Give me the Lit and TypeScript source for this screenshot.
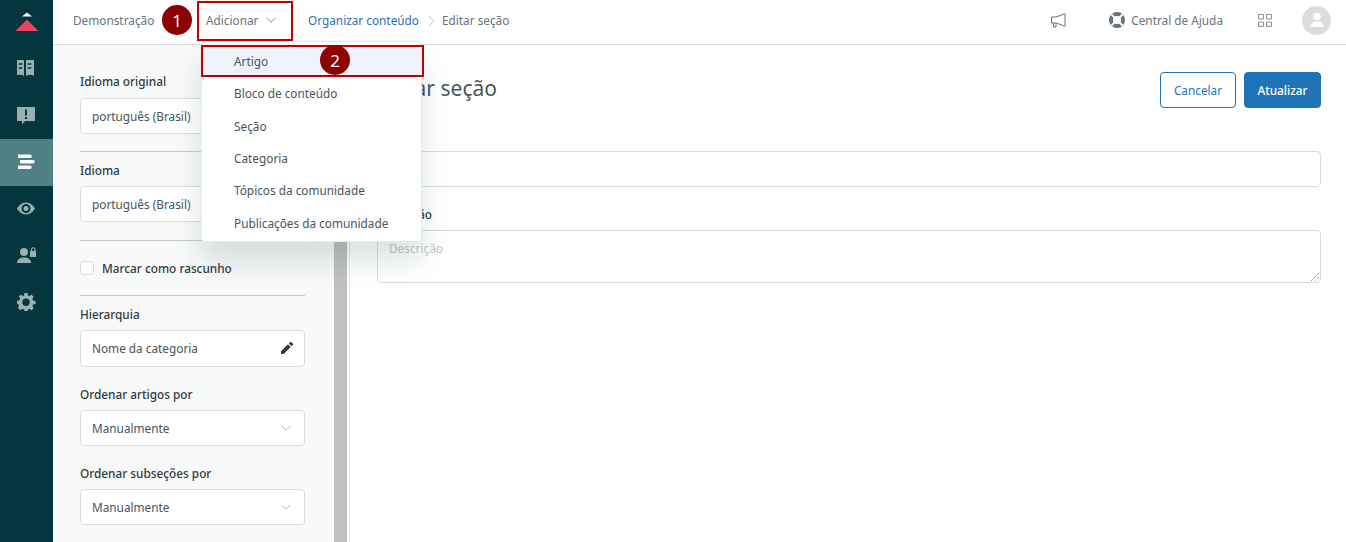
import { LitElement, html, css, svg } from 'lit';
import { customElement } from 'lit/decorators.js';

const chevron = html`<svg class="chev" width="10" height="10" viewBox="0 0 10 10"><path d="M.5 3l4.500 4 4.500-4" fill="none" stroke="currentColor" stroke-width="1"/></svg>`;

const navIcons = [
  svg`<path d="M0 1.500C3-.3 6 0 8 1.500V17c-2-1.400-5-1.600-8-.3zM18 1.500c-3-1.800-6-1.500-8 0V17c2-1.400 5-1.600 8-.3z" fill="currentColor" transform="translate(-1 -1)"/><path d="M2 5h3.800M2 9h3.800M11 5h3.800M11 9h3.800" stroke="#03363d" stroke-width="1.600" transform="translate(-.4 -1)"/>`,
  svg`<path d="M0 0h18v14H8l-3 3.500V14H0z" fill="currentColor"/><path d="M8 2.500h2V8.500H8zM8 10h2v2H8z" fill="#03363d"/>`,
  svg`<path d="M1 0h12a1.500 1.500 0 0 1 0 3.500H1zM3 5.500h13a1.600 1.600 0 0 1 0 3.500H3zM1 11h12a1.500 1.500 0 0 1 0 3.500H1z" fill="currentColor" transform="translate(0 1.500)"/>`,
  svg`<path d="M9 2.500C4.500 2.500 1.500 6 0 8.500c1.500 2.500 4.500 6 9 6s7.500-3.500 9-6c-1.500-2.500-4.500-6-9-6zm0 10.500a4.500 4.500 0 1 1 0-9 4.500 4.500 0 0 1 0 9zm0-7a2.500 2.500 0 1 0 0 5 2.500 2.500 0 0 0 0-5z" fill="currentColor"/>`,
  svg`<circle cx="7" cy="6" r="4" fill="currentColor"/><path d="M0 17c0-3.500 3-5.500 7-5.500s7 2 7 5.500z" fill="currentColor"/><path d="M13 5h6.500v6H13z" fill="currentColor"/><path d="M14.500 5V3.500a1.700 1.700 0 0 1 3.500 0V5" fill="none" stroke="currentColor" stroke-width="1.200"/>`,
  svg`<path fill="currentColor" fill-rule="evenodd" d="M7.500 0h3l.4 2.400 1.700.7 2-1.400 2.100 2.100-1.400 2 .7 1.700 2.500.5v3l-2.500.4-.7 1.700 1.400 2-2.100 2.100-2-1.400-1.700.7-.4 2.500h-3l-.4-2.500-1.700-.7-2 1.400L.7 14.900l1.400-2-.7-1.700L-.1 10.800v-3l2.500-.5.7-1.700-1.400-2L3.800 1.700l2 1.400 1.300-.7zM9 5.500a3.700 3.700 0 1 0 0 7.400 3.700 3.700 0 0 0 0-7.400z"/>`,
];

@customElement('app-root')
export class AppRoot extends LitElement {
  static styles = css`
    :host {
      display: block;
      width: 1346px;
      height: 542px;
      overflow: hidden;
      position: relative;
      font-family: 'Noto Sans', sans-serif;
      font-size: 11.800px;
      color: #2f3941;
      background: #fff;
    }
    .app { display: flex; height: 542px; }
    .rail {
      width: 53px;
      flex: none;
      background: #03363d;
      color: #9bb0b3;
      display: flex;
      flex-direction: column;
      align-items: center;
    }
    .logo { height: 46px; padding-top: 11px; box-sizing: border-box; }
    .rail-item {
      width: 100%;
      height: 46.500px;
      display: flex;
      align-items: center;
      justify-content: center;
    }
    .rail-item.active { background: #4d8184; color: #fff; }
    .body { flex: 1; display: flex; flex-direction: column; min-width: 0; }
    .top {
      height: 45px;
      flex: none;
      box-sizing: border-box;
      border-bottom: 1px solid #d8dcde;
      display: flex;
      align-items: center;
      padding: 0 0 4px 20px;
      color: #68737d;
    }
    .brand { width: 124px; flex: none; }
    .add { display: flex; align-items: center; gap: 8px; width: 111px; flex: none; padding-left: 9px; box-sizing: border-box; }
    .chev { flex: none; color: #87929d; }
    .box .chev { color: #b4bbc0; margin-right: 2px; }
    .crumb { color: #1f73b7; }
    .sep { margin: 2px 7px 0 9px; }
    .spacer { flex: 1; }
    .top-right { display: flex; align-items: center; padding-right: 15px; }
    .help { display: flex; align-items: center; gap: 6px; margin-left: 43px; }
    .apps { margin-left: 35px; }
    .avatar {
      width: 29px;
      height: 29px;
      border-radius: 50%;
      background: #dcdcdc;
      margin-left: 30px;
      display: flex;
      align-items: center;
      justify-content: center;
    }
    .content { flex: 1; display: flex; min-height: 0; }
    .side {
      width: 281px;
      flex: none;
      box-sizing: border-box;
      background: #f8f9f9;
      padding: 28px 29px 0 27px;
    }
    .side label, .main label { display: block; font-weight: 500; line-height: 16px; color: #2f3941; }
    .box {
      box-sizing: border-box;
      height: 36px;
      margin-top: 8px;
      background: #fff;
      border: 1px solid #d8dcde;
      border-radius: 4px;
      padding: 0 11px;
      display: flex;
      align-items: center;
      justify-content: space-between;
      color: #49545c;
    }
    .box.first { margin-top: 9px; }
    .box.tall { height: 37px; padding-bottom: 1px; }
    hr { border: 0; border-top: 1px solid #c2c8cc; margin: 0; }
    .sec-a { margin: 17px 0 10px; }
    .sec-b { margin: 18px 0 19px; }
    .check { display: flex; align-items: center; gap: 8px; font-weight: 500; line-height: 16px; margin-bottom: 19px; }
    .check i { width: 12px; height: 12px; background: #fff; border: 1px solid #d8dcde; border-radius: 3px; display: block; }
    .gap { margin-top: 19px; }
    .scroll { width: 13px; flex: none; background: #c0c0c0; }
    .main {
      flex: 1;
      margin-left: 2px;
      border-left: 1px solid #e4e7e8;
      padding: 27px 25px 0 27px;
      min-width: 0;
    }
    .head { display: flex; justify-content: space-between; align-items: flex-start; }
    h1 { margin: 1px 0 0; font-size: 21px; font-weight: 400; line-height: 30px; color: #49545c; }
    .actions { display: flex; gap: 8px; }
    .btn {
      box-sizing: border-box;
      height: 36px;
      border-radius: 4px;
      display: flex;
      align-items: center;
      justify-content: center;
      border: 1px solid #1f73b7;
    }
    .btn.ghost { width: 76px; color: #1f73b7; background: #fff; }
    .btn.solid { width: 77px; color: #fff; background: #1f73b7; font-weight: 500; }
    .main label.l1 { margin-top: 17px; height: 16px; }
    .input { height: 36px; box-sizing: border-box; border: 1px solid #d8dcde; border-radius: 4px; margin-top: 10px; }
    .main label.l2 { margin-top: 19px; }
    .area {
      position: relative;
      box-sizing: border-box;
      height: 53px;
      margin-top: 8px;
      border: 1px solid #d8dcde;
      border-radius: 4px;
      padding: 9px 11px;
      color: #c2c8cc;
    }
    .grip { position: absolute; right: 0; bottom: 0; }
    .menu {
      position: absolute;
      left: 201px;
      top: 41px;
      width: 221px;
      height: 201px;
      box-sizing: border-box;
      padding-top: 3px;
      background: #fff;
      border: 1px solid #e9ebed;
      border-radius: 4px;
      box-shadow: 0 20px 28px rgba(23, 73, 77, 0.15);
      color: #49545c;
    }
    .menu div {
      height: 32.300px;
      display: flex;
      align-items: center;
      padding-left: 32px;
    }
    .menu div.on { background: #edf3f9; }
    .frame { position: absolute; box-sizing: border-box; border: 2px solid #c00000; }
    .f1 { left: 197px; top: 1px; width: 96px; height: 40px; }
    .f2 { left: 201px; top: 45px; width: 223px; height: 32px; }
    .dot {
      position: absolute;
      width: 30px;
      height: 30px;
      border-radius: 50%;
      background: #8b0000;
      color: #fff;
      font-size: 17px;
      display: flex;
      align-items: center;
      justify-content: center;
    }
    .d1 { left: 162px; top: 5px; }
    .d2 { left: 320px; top: 45px; }
  `;

  render() {
    return html`
      <div class="app">
        <nav class="rail">
          <div class="logo">
            <svg width="24" height="20" viewBox="0 0 24 20"><path d="M12 1.500l5 4H7z" fill="#fff"/><path d="M12 8.500L23.500 20H.5z" fill="#e8435f"/></svg>
          </div>
          ${navIcons.map(
            (p, i) => html`<div class="rail-item ${i === 2 ? 'active' : ''}"><svg width="19" height="18" viewBox="0 0 19 18">${p}</svg></div>`
          )}
        </nav>
        <div class="body">
          <header class="top">
            <span class="brand">Demonstração</span>
            <span class="add">Adicionar ${chevron}</span>
            <span class="crumb">Organizar conteúdo</span>
            <svg class="sep" width="7" height="12" viewBox="0 0 7 12"><path d="M1 1l4.500 5L1 11" fill="none" stroke="#c2c8cc"/></svg>
            <span>Editar seção</span>
            <span class="spacer"></span>
            <div class="top-right">
              <svg width="16" height="15" viewBox="0 0 16 15"><path d="M15 .8v12.400L6 10H1.500V4H6zM3.500 10v4H6v-4" fill="none" stroke="#68737d"/></svg>
              <div class="help">
                <svg width="16" height="16" viewBox="0 0 16 16"><circle cx="8" cy="8" r="6" fill="none" stroke="#68737d" stroke-width="4"/><path d="M2.500 2.500l3 3M13.500 2.500l-3 3M2.500 13.500l3-3M13.500 13.500l-3-3" stroke="#fff" stroke-width="2"/></svg>
                <span>Central de Ajuda</span>
              </div>
              <svg class="apps" width="14" height="13" viewBox="0 0 14 13"><path d="M.5.500h5v4.500h-5zM8.500.500h5v4.500h-5zM.5 8h5v4.500h-5zM8.500 8h5v4.500h-5z" fill="none" stroke="#87929d"/></svg>
              <div class="avatar">
                <svg width="16" height="16" viewBox="0 0 16 16"><circle cx="8" cy="4.500" r="3.700" fill="#fff"/><path d="M1.500 15c0-3.500 3-5.500 6.500-5.500s6.500 2 6.500 5.500z" fill="#fff"/></svg>
              </div>
            </div>
          </header>
          <div class="content">
            <aside class="side">
              <label>Idioma original</label>
              <div class="box first">português (Brasil)</div>
              <hr class="sec-a" />
              <label>Idioma</label>
              <div class="box">português (Brasil)</div>
              <hr class="sec-b" />
              <div class="check"><i></i>Marcar como rascunho</div>
              <hr class="sec-a" />
              <label>Hierarquia</label>
              <div class="box tall">
                Nome da categoria
                <svg width="12" height="12" viewBox="0 0 13 13"><path d="M0 13V10l7.500-7.500 3 3L3 13zM8.500 1.500L10 0a.8.8 0 0 1 1 0l2 2a.8.8 0 0 1 0 1l-1.500 1.500z" fill="#2f3941"/></svg>
              </div>
              <label class="gap">Ordenar artigos por</label>
              <div class="box">Manualmente ${chevron}</div>
              <label class="gap">Ordenar subseções por</label>
              <div class="box">Manualmente ${chevron}</div>
            </aside>
            <div class="scroll"></div>
            <main class="main">
              <div class="head">
                <h1>Editar seção</h1>
                <div class="actions">
                  <div class="btn ghost">Cancelar</div>
                  <div class="btn solid">Atualizar</div>
                </div>
              </div>
              <label class="l1">Nome</label>
              <div class="input"></div>
              <label class="l2">Descrição</label>
              <div class="area">
                Descrição
                <svg class="grip" width="10" height="10" viewBox="0 0 10 10"><path d="M9 1L1 9M9 5L5 9" stroke="#68737d" stroke-dasharray="1 1"/></svg>
              </div>
            </main>
          </div>
        </div>
      </div>

      <div class="menu">
        <div class="on">Artigo</div>
        <div>Bloco de conteúdo</div>
        <div>Seção</div>
        <div>Categoria</div>
        <div>Tópicos da comunidade</div>
        <div>Publicações da comunidade</div>
      </div>
      <div class="frame f1"></div>
      <div class="frame f2"></div>
      <div class="dot d1">1</div>
      <div class="dot d2">2</div>
    `;
  }
}
